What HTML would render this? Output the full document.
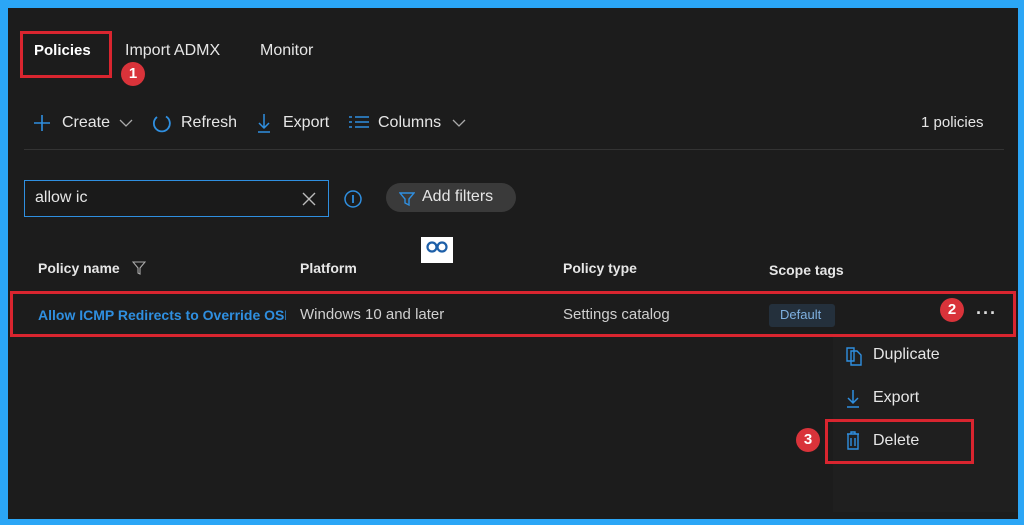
<!DOCTYPE html>
<html><head><meta charset="utf-8"><style>
*{margin:0;padding:0;box-sizing:border-box}
body{width:1024px;height:525px;background:#2ba6f6;position:relative;overflow:hidden;font-family:"Liberation Sans",sans-serif;}
#p{position:absolute;left:8px;top:8px;width:1010px;height:511px;background:#1c1c1c;}
.t{position:absolute;color:#e6e6e6;font-size:16px;white-space:nowrap}
.b{font-weight:bold}
.red{position:absolute;border:3px solid #d9252f}
.num{position:absolute;width:24px;height:24px;border-radius:50%;background:#d9333a;color:#fff;font-weight:bold;font-size:15px;text-align:center;line-height:24px}
.blue{color:#2f8fe0}
svg{position:absolute}
</style></head><body>
<div id="p"></div>
<div class="t b" style="left:34px;top:42px;color:#fff;font-size:15px">Policies</div>
<div class="red" style="left:20px;top:31px;width:92px;height:47px"></div>
<div class="num" style="left:121px;top:62px">1</div>
<div class="t" style="left:125px;top:42px">Import ADMX</div>
<div class="t" style="left:260px;top:42px">Monitor</div>

<svg style="left:33px;top:114px" width="18" height="18"><path d="M9 1V17M1 9H17" stroke="#2f8fe0" stroke-width="1.6"/></svg>
<div class="t" style="left:62px;top:114px">Create</div>
<svg style="left:119px;top:118px" width="14" height="10"><path d="M1 2L7 8L13 2" stroke="#aaa" fill="none" stroke-width="1.3"/></svg>
<svg style="left:151px;top:113px" width="22" height="22"><path d="M6 4A8 8 0 1 0 15 3.5" stroke="#2f8fe0" fill="none" stroke-width="1.8"/></svg>
<div class="t" style="left:181px;top:114px">Refresh</div>
<svg style="left:256px;top:112px" width="16" height="22"><path d="M8 2V16M3 11L8 16L13 11M2 20H14" stroke="#2f8fe0" fill="none" stroke-width="1.5"/></svg>
<div class="t" style="left:283px;top:114px">Export</div>
<svg style="left:348px;top:115px" width="22" height="16"><path d="M1 2H4M1 7H4M1 12H4M7 2H21M7 7H21M7 12H21" stroke="#2f8fe0" stroke-width="1.6"/></svg>
<div class="t" style="left:378px;top:114px">Columns</div>
<svg style="left:452px;top:118px" width="14" height="10"><path d="M1 2L7 8L13 2" stroke="#aaa" fill="none" stroke-width="1.3"/></svg>
<div class="t" style="left:921px;top:114px;font-size:15px">1 policies</div>
<div style="position:absolute;left:24px;top:149px;width:980px;height:1px;background:#333"></div>

<div style="position:absolute;left:24px;top:180px;width:305px;height:37px;border:1px solid #2f8fe0;background:#1a1a1a"></div>
<div class="t" style="left:35px;top:189px">allow ic</div>
<svg style="left:301px;top:191px" width="16" height="16"><path d="M2 2L14 14M14 2L2 14" stroke="#bbb" stroke-width="1.4"/></svg>
<svg style="left:343px;top:189px" width="20" height="20"><circle cx="10" cy="10" r="8" stroke="#2f8fe0" fill="none" stroke-width="1.5"/><path d="M10 6V14" stroke="#2f8fe0" stroke-width="1.8"/></svg>
<div style="position:absolute;left:386px;top:183px;width:130px;height:29px;border-radius:15px;background:#3a3a3a"></div>
<svg style="left:399px;top:191px" width="16" height="16"><path d="M1 2H15L10 8V14L6 12V8Z" stroke="#2f8fe0" fill="none" stroke-width="1.4"/></svg>
<div class="t" style="left:422px;top:188px">Add filters</div>

<div style="position:absolute;left:421px;top:237px;width:32px;height:26px;background:#fff"></div>
<svg style="left:425px;top:240px" width="24" height="14"><circle cx="7" cy="7" r="4.5" stroke="#1d5fa8" fill="none" stroke-width="2.2"/><circle cx="17" cy="7" r="4.5" stroke="#1d5fa8" fill="none" stroke-width="2.2"/></svg>

<div class="t b" style="left:38px;top:260px;font-size:14px">Policy name</div>
<svg style="left:132px;top:261px" width="14" height="14"><path d="M1 1H13L8 7V13L6 12V7Z" stroke="#aaa" fill="none" stroke-width="1.1"/></svg>
<div class="t b" style="left:300px;top:260px;font-size:14px">Platform</div>
<div class="t b" style="left:563px;top:260px;font-size:14px">Policy type</div>
<div class="t b" style="left:769px;top:262px;font-size:14px">Scope tags</div>

<div class="red" style="left:10px;top:291px;width:1006px;height:46px"></div>
<div class="t b blue" style="left:38px;top:307px;font-size:14px;width:248px;overflow:hidden">Allow ICMP Redirects to Override OSPF Generated Routes</div>
<div class="t" style="left:300px;top:306px;color:#d0d0d0;font-size:15px">Windows 10 and later</div>
<div class="t" style="left:563px;top:306px;color:#d0d0d0;font-size:15px">Settings catalog</div>
<div style="position:absolute;left:769px;top:304px;width:66px;height:23px;background:#24303c;border-radius:3px"></div>
<div class="t" style="left:780px;top:307px;font-size:13px;color:#7fb0e0">Default</div>
<div class="num" style="left:940px;top:298px">2</div>
<div class="t b" style="left:976px;top:303px;color:#ddd;letter-spacing:1px;font-size:18px">···</div>

<div style="position:absolute;left:833px;top:337px;width:185px;height:175px;background:#1f1f1f"></div>
<svg style="left:845px;top:345px" width="18" height="22"><path d="M2 3H9V16H2Z M6 6H12L16 10V20H6Z" stroke="#2f8fe0" fill="none" stroke-width="1.4"/></svg>
<div class="t" style="left:873px;top:346px">Duplicate</div>
<svg style="left:846px;top:388px" width="14" height="22"><path d="M7 2V15M2 10L7 15L12 10M1 19H13" stroke="#2f8fe0" fill="none" stroke-width="1.5"/></svg>
<div class="t" style="left:873px;top:389px">Export</div>
<div class="red" style="left:825px;top:419px;width:149px;height:45px"></div>
<div class="num" style="left:796px;top:428px">3</div>
<svg style="left:845px;top:431px" width="16" height="20"><path d="M2 3H14M6 3V1H10V3M3 3V18H13V3M6 7V15M10 7V15" stroke="#2f8fe0" fill="none" stroke-width="1.4"/></svg>
<div class="t" style="left:873px;top:432px">Delete</div>
</body></html>
